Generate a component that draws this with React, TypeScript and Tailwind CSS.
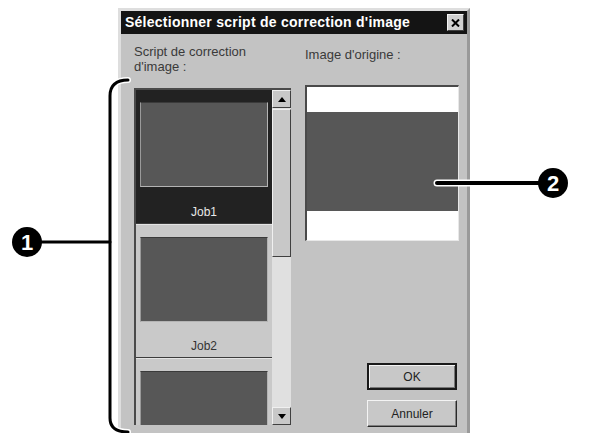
import React from "react";

function Thumb() {
  return (
    <div className="mx-[4px] h-[85px] bg-[#575757] border border-t-[#3a3a3a] border-l-[#9a9a9a] border-r-[#b4b4b4] border-b-[#b4b4b4]" />
  );
}

function Item({ label, selected }: { label: string; selected?: boolean }) {
  return (
    <div
      className={
        "h-[134px] shrink-0 pt-[12px] flex flex-col border-b border-[#3c3c3c] " +
        (selected ? "bg-[#222222]" : "bg-[#c9c9c9] border-t border-t-[#e4e4e4]")
      }
    >
      <Thumb />
      <div
        className={
          "flex-1 flex items-end justify-center pb-[5px] text-[12px] leading-none " +
          (selected ? "text-[#e8e8e8]" : "text-[#333]")
        }
      >
        {label}
      </div>
    </div>
  );
}

function Arrow({ up }: { up?: boolean }) {
  return (
    <div className="h-[18px] shrink-0 bg-[#c8c8c8] border border-t-[#f0f0f0] border-l-[#f0f0f0] border-r-[#404040] border-b-[#404040] flex items-center justify-center">
      <svg width="8" height="5" viewBox="0 0 8 5">
        {up ? <polygon points="4,0 8,5 0,5" fill="#000" /> : <polygon points="0,0 8,0 4,5" fill="#000" />}
      </svg>
    </div>
  );
}

function Button({ label, def }: { label: string; def?: boolean }) {
  return (
    <div
      className={
        "w-[90px] h-[27px] flex items-center justify-center text-[12px] text-[#222] bg-[#c8c8c8] " +
        (def
          ? "border-2 border-[#1a1a1a] shadow-[inset_1px_1px_0_#f4f4f4,inset_-1px_-1px_0_#777]"
          : "border border-t-[#f4f4f4] border-l-[#f4f4f4] border-r-[#2a2a2a] border-b-[#2a2a2a] shadow-[inset_-1px_-1px_0_#808080]")
      }
    >
      {label}
    </div>
  );
}

export default function App() {
  return (
    <div
      className="relative w-[601px] h-[433px] bg-white overflow-hidden"
      style={{ fontFamily: '"Liberation Sans", Arial, sans-serif' }}
    >
      <div className="ml-[118px] pt-[8px]">
        <div className="w-[352px] h-[430px] bg-[#c3c3c3] border-t-[3px] border-l-[3px] border-r-[3px] border-t-[#dedede] border-l-[#dedede] border-r-[#9a9a9a] flex flex-col">
          {/* title bar */}
          <div className="h-[23px] shrink-0 bg-[#141414] flex items-center justify-between pl-[4px] pr-[3px]">
            <span className="text-white font-bold text-[14px] tracking-[0.25px]">
              Sélectionner script de correction d'image
            </span>
            <div className="w-[17px] h-[17px] bg-[#d0d0d0] border border-t-[#f4f4f4] border-l-[#f4f4f4] border-r-[#404040] border-b-[#404040] flex items-center justify-center">
              <svg width="9" height="8" viewBox="0 0 9 8">
                <path d="M1 0.5 L8 7.5 M8 0.5 L1 7.5" stroke="#000" strokeWidth="2" />
              </svg>
            </div>
          </div>
          {/* body */}
          <div className="flex flex-1 min-h-0">
            {/* left column */}
            <div className="ml-[13px] w-[157px] flex flex-col">
              <div className="h-[54px] pt-[10px] text-[13px] leading-[15px] text-[#3a3a3a]">
                Script de correction
                <br />
                d'image :
              </div>
              <div className="w-[157px] h-[337px] flex border-t-2 border-l-2 border-t-[#4a4a4a] border-l-[#4a4a4a] bg-[#c9c9c9]">
                <div className="w-[136px] flex flex-col overflow-hidden">
                  <Item label="Job1" selected />
                  <Item label="Job2" />
                  <Item label="" />
                </div>
                <div className="w-[19px] flex flex-col bg-[#e0e0e0]">
                  <Arrow up />
                  <div className="mt-[1px] h-[148px] shrink-0 bg-[#c8c8c8] border border-t-[#f0f0f0] border-l-[#f0f0f0] border-r-[#404040] border-b-[#404040]" />
                  <div className="flex-1" />
                  <Arrow />
                </div>
              </div>
            </div>
            {/* right column */}
            <div className="ml-[14px] w-[154px] flex flex-col">
              <div className="h-[51px] pt-[13px] text-[13px] leading-[15px] text-[#3a3a3a]">Image d'origine :</div>
              <div className="h-[156px] flex flex-col bg-white border-t-2 border-l-2 border-t-[#4a4a4a] border-l-[#4a4a4a] border-r border-b border-r-[#e8e8e8] border-b-[#e8e8e8]">
                <div className="h-[25px]" />
                <div className="h-[99px] bg-[#575757]" />
              </div>
              <div className="mt-[122px] ml-[62px] flex flex-col gap-[10px]">
                <Button label="OK" def />
                <Button label="Annuler" />
              </div>
            </div>
          </div>
        </div>
      </div>

      {/* annotation overlays */}
      <svg className="absolute left-0 top-0" width="601" height="433" viewBox="0 0 601 433">
        <g fill="none" strokeLinecap="round">
          <path d="M128 80 Q110 80 110 96 L110 418 Q110 432 128 432" stroke="#fff" strokeWidth="6" />
          <path d="M128 80 Q110 80 110 96 L110 418 Q110 432 128 432" stroke="#000" strokeWidth="3" />
          <path d="M40 242 L110 242" stroke="#000" strokeWidth="3" />
          <path d="M437 183 L545 183" stroke="#fff" strokeWidth="7" />
          <path d="M437 183 L545 183" stroke="#000" strokeWidth="4" />
        </g>
        <circle cx="27" cy="242" r="15" fill="#000" />
        <text x="27" y="250" textAnchor="middle" fill="#fff" fontSize="22" fontWeight="bold" fontFamily="Liberation Sans, Arial, sans-serif">1</text>
        <circle cx="553" cy="183" r="15" fill="#000" />
        <text x="553" y="191" textAnchor="middle" fill="#fff" fontSize="22" fontWeight="bold" fontFamily="Liberation Sans, Arial, sans-serif">2</text>
      </svg>
    </div>
  );
}
